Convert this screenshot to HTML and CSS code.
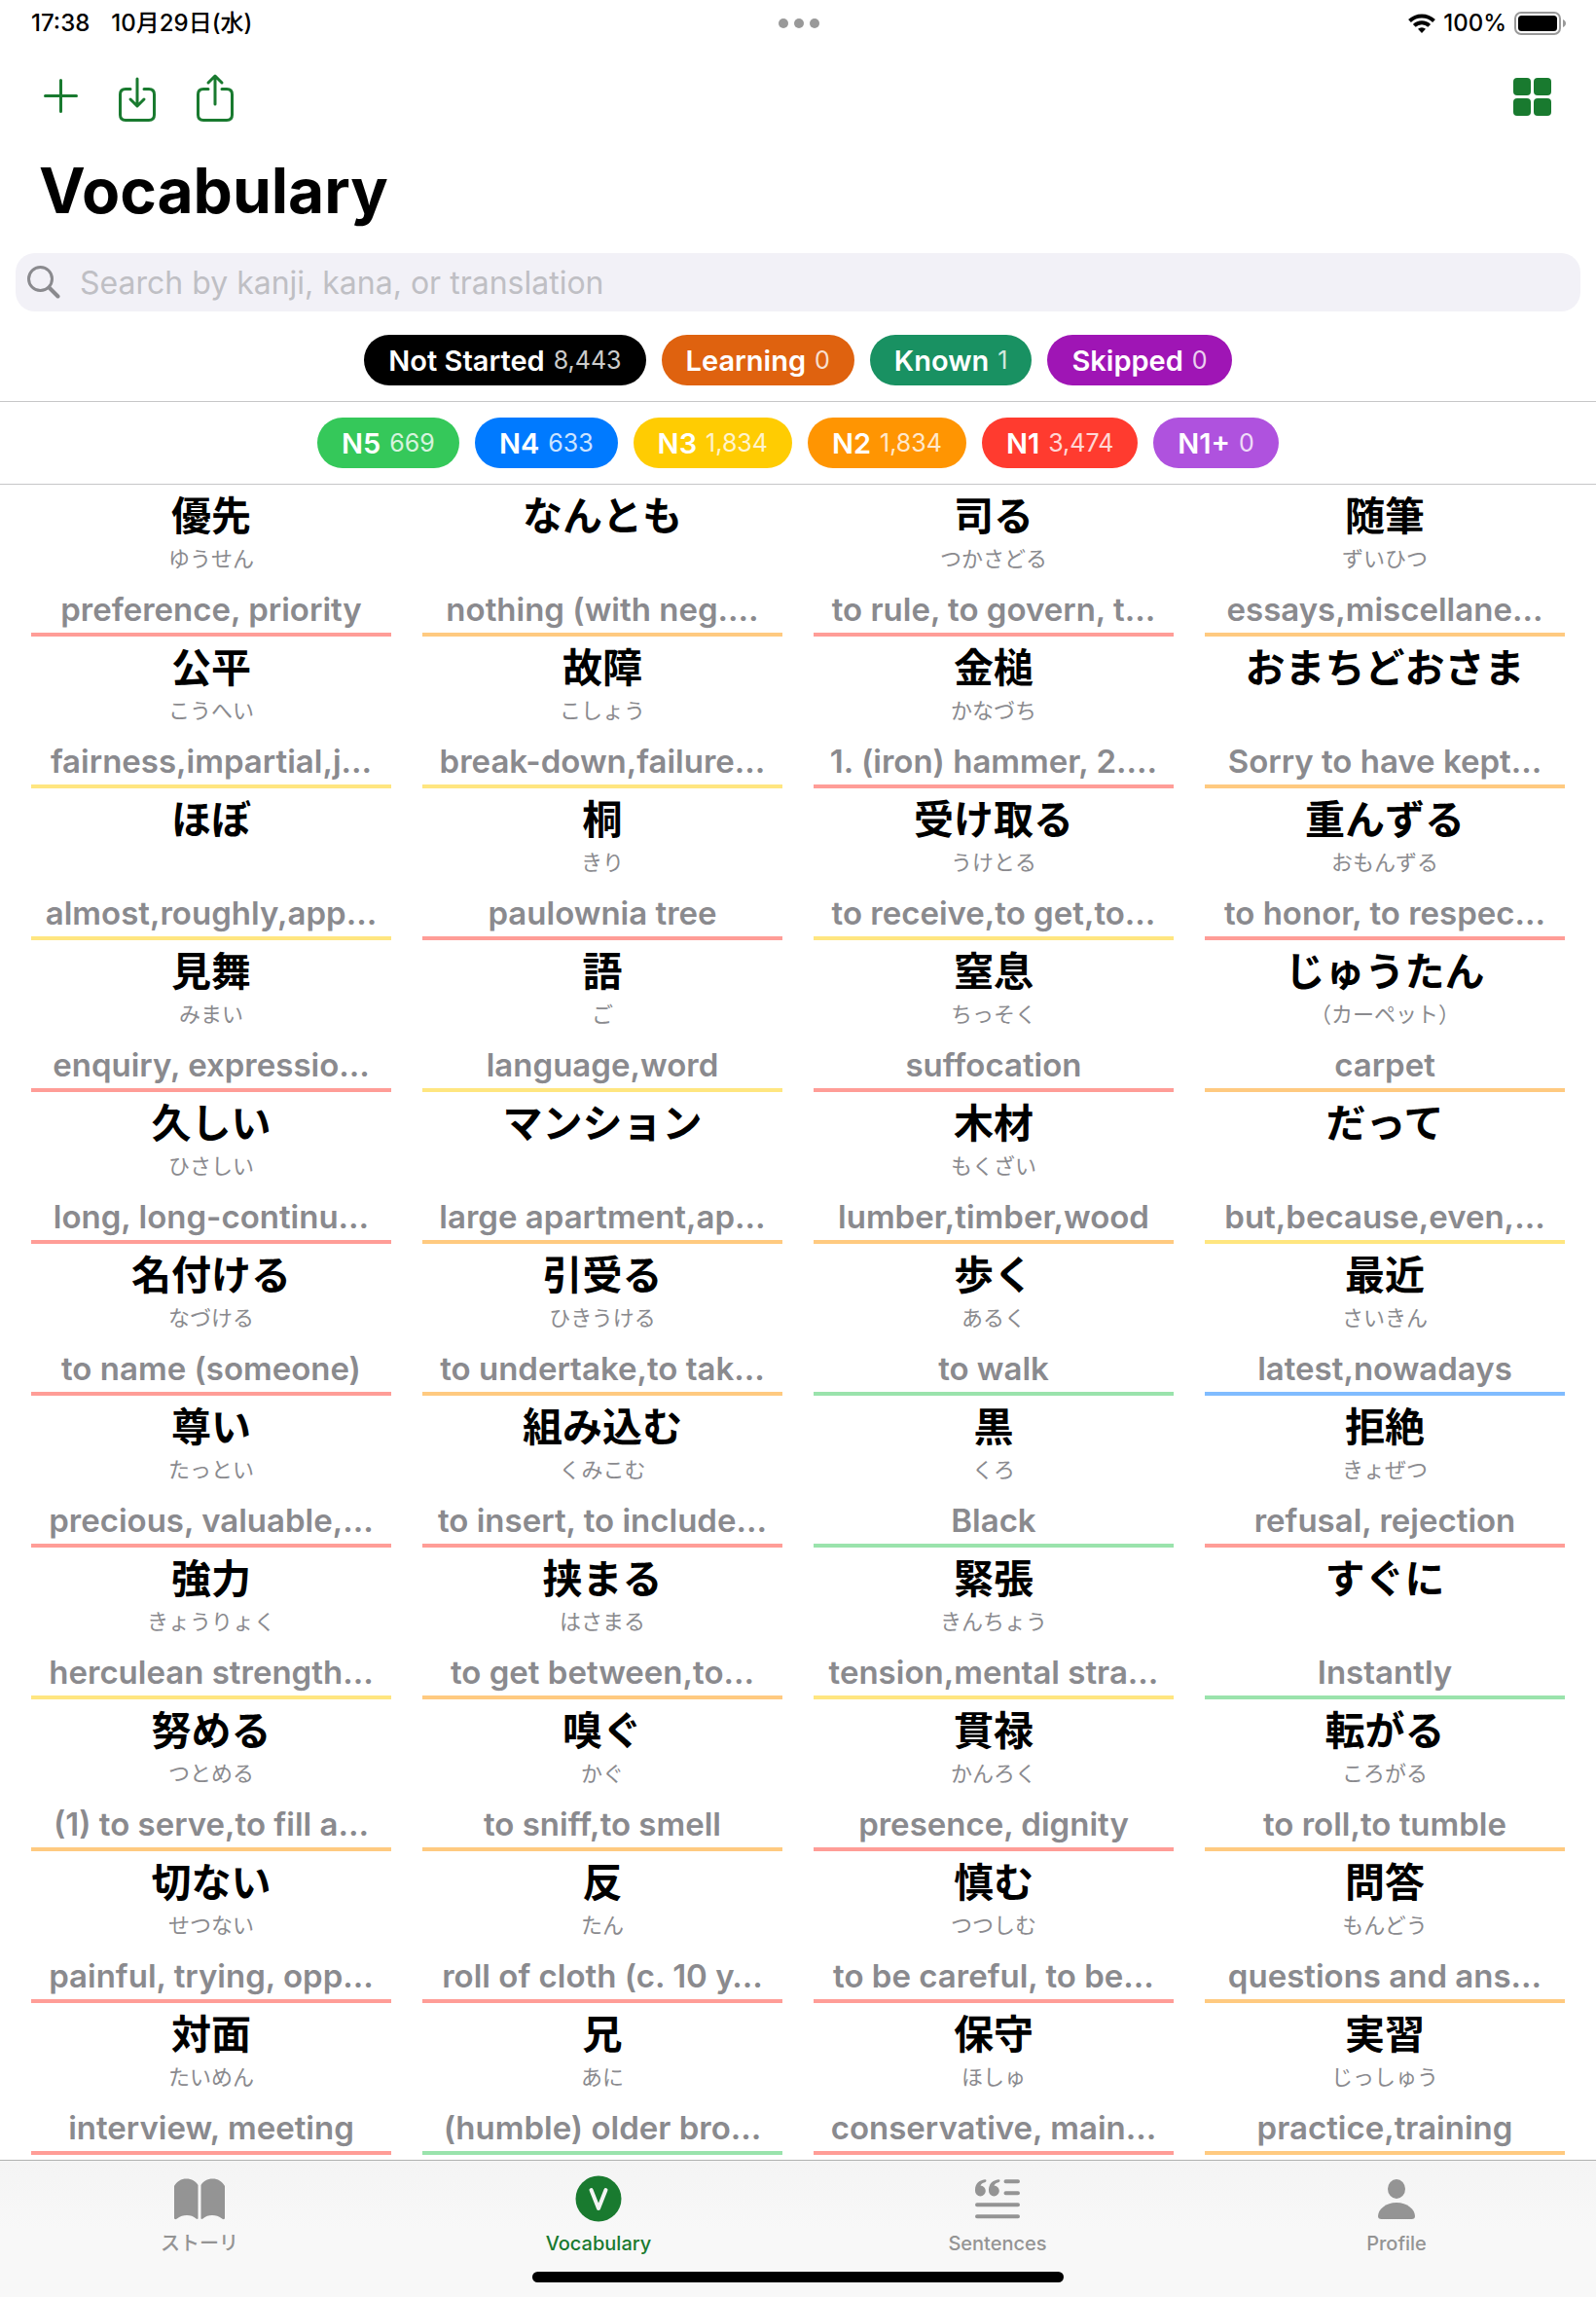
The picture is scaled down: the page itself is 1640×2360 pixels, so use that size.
FILE: index.html
```html
<!DOCTYPE html>
<html lang="ja">
<head>
<meta charset="utf-8">
<meta name="viewport" content="width=device-width, initial-scale=1">
<title>Vocabulary</title>
<link rel="stylesheet" href="styles.css">
</head>
<body>
<div class="status">
  <div class="status-left"><span>17:38</span><span>10月29日(水)</span></div>
  <svg class="dots" viewBox="0 0 42 10" width="42" height="10" fill="#999"><circle cx="5" cy="5" r="5"/><circle cx="21" cy="5" r="5"/><circle cx="37" cy="5" r="5"/></svg>
  <div class="status-right">
    <svg viewBox="0 0 28 20" width="28" height="20"><path fill="none" stroke="#000" stroke-width="4" d="M1.5 7.5a18 18 0 0 1 25 0M6.3 12.4a11 11 0 0 1 15.4 0"/><path d="M14 20l-4-4.200a6 6 0 0 1 8 0z"/></svg>
    <span>100%</span>
    <svg viewBox="0 0 54 24" width="54" height="24"><rect x="1" y="1" width="46" height="22" rx="6" fill="none" stroke="#999" stroke-width="2"/><rect x="4" y="4" width="40" height="16" rx="3.500"/><path fill="#999" d="M50 8c4 1.500 4 6.500 0 8z"/></svg>
  </div>
</div>

<header class="header">
  <div class="toolbar">
    <div class="tools">
      <button class="tool" aria-label="Add"><svg viewBox="0 0 44 52" width="44" height="52"><path d="M6.500 25.500h32M22.500 9.500v32"/></svg></button>
      <button class="tool" aria-label="Import"><svg viewBox="0 0 48 52" width="48" height="52"><path d="M18 18.500h-5q-5.500 0-5.500 5.500v21q0 5.500 5.500 5.500h24q5.500 0 5.500-5.500V24q0-5.500-5.500-5.500h-5M25 8v27M18 29l7 7 7-7"/></svg></button>
      <button class="tool" aria-label="Share"><svg viewBox="0 0 48 52" width="48" height="52"><path d="M18 18.500h-5q-5.500 0-5.500 5.500v21q0 5.500 5.500 5.500h24q5.500 0 5.500-5.500V24q0-5.500-5.500-5.500h-5M25 34V6M18 12l7-7 7 7"/></svg></button>
    </div>
    <button class="layout" aria-label="Grid layout"><svg viewBox="0 0 39 39" width="39" height="39"><rect width="18" height="18" rx="4"/><rect x="21" width="18" height="18" rx="4"/><rect y="21" width="18" height="18" rx="4"/><rect x="21" y="21" width="18" height="18" rx="4"/></svg></button>
  </div>
  <h1 class="title">Vocabulary</h1>
  <label class="search">
    <svg viewBox="0 0 34 34" width="34" height="34"><circle cx="13.500" cy="13.500" r="12" stroke-width="3"/><path d="M22.500 22.500l9 9" stroke-width="4"/></svg>
    <input type="search" aria-label="Search" placeholder="Search by kanji, kana, or translation">
  </label>
</header>

<div class="filters">
  <button class="chip not-started">Not Started <span>8,443</span></button>
  <button class="chip learning">Learning <span>0</span></button>
  <button class="chip known">Known <span>1</span></button>
  <button class="chip skipped">Skipped <span>0</span></button>
</div>
<div class="filters">
  <button class="chip level5">N5 <span>669</span></button>
  <button class="chip level4">N4 <span>633</span></button>
  <button class="chip level3">N3 <span>1,834</span></button>
  <button class="chip level2">N2 <span>1,834</span></button>
  <button class="chip level1">N1 <span>3,474</span></button>
  <button class="chip level0">N1+ <span>0</span></button>
</div>

<main class="words">
  <article class="word n1"><h2>優先</h2><p class="kana">ゆうせん</p><p class="meaning">preference, priority</p></article>
  <article class="word n2"><h2>なんとも</h2><p class="kana"></p><p class="meaning">nothing (with neg.…</p></article>
  <article class="word n1"><h2>司る</h2><p class="kana">つかさどる</p><p class="meaning">to rule, to govern, t…</p></article>
  <article class="word n2"><h2>随筆</h2><p class="kana">ずいひつ</p><p class="meaning">essays,miscellane…</p></article>

  <article class="word n3"><h2>公平</h2><p class="kana">こうへい</p><p class="meaning">fairness,impartial,j…</p></article>
  <article class="word n3"><h2>故障</h2><p class="kana">こしょう</p><p class="meaning">break-down,failure…</p></article>
  <article class="word n1"><h2>金槌</h2><p class="kana">かなづち</p><p class="meaning">1. (iron) hammer, 2.…</p></article>
  <article class="word n2"><h2>おまちどおさま</h2><p class="kana"></p><p class="meaning">Sorry to have kept…</p></article>

  <article class="word n3"><h2>ほぼ</h2><p class="kana"></p><p class="meaning">almost,roughly,app…</p></article>
  <article class="word n1"><h2>桐</h2><p class="kana">きり</p><p class="meaning">paulownia tree</p></article>
  <article class="word n3"><h2>受け取る</h2><p class="kana">うけとる</p><p class="meaning">to receive,to get,to…</p></article>
  <article class="word n1"><h2>重んずる</h2><p class="kana">おもんずる</p><p class="meaning">to honor, to respec…</p></article>

  <article class="word n1"><h2>見舞</h2><p class="kana">みまい</p><p class="meaning">enquiry, expressio…</p></article>
  <article class="word n3"><h2>語</h2><p class="kana">ご</p><p class="meaning">language,word</p></article>
  <article class="word n1"><h2>窒息</h2><p class="kana">ちっそく</p><p class="meaning">suffocation</p></article>
  <article class="word n2"><h2>じゅうたん</h2><p class="kana">（カーペット）</p><p class="meaning">carpet</p></article>

  <article class="word n1"><h2>久しい</h2><p class="kana">ひさしい</p><p class="meaning">long, long-continu…</p></article>
  <article class="word n2"><h2>マンション</h2><p class="kana"></p><p class="meaning">large apartment,ap…</p></article>
  <article class="word n2"><h2>木材</h2><p class="kana">もくざい</p><p class="meaning">lumber,timber,wood</p></article>
  <article class="word n3"><h2>だって</h2><p class="kana"></p><p class="meaning">but,because,even,…</p></article>

  <article class="word n1"><h2>名付ける</h2><p class="kana">なづける</p><p class="meaning">to name (someone)</p></article>
  <article class="word n2"><h2>引受る</h2><p class="kana">ひきうける</p><p class="meaning">to undertake,to tak…</p></article>
  <article class="word n5"><h2>歩く</h2><p class="kana">あるく</p><p class="meaning">to walk</p></article>
  <article class="word n4"><h2>最近</h2><p class="kana">さいきん</p><p class="meaning">latest,nowadays</p></article>

  <article class="word n1"><h2>尊い</h2><p class="kana">たっとい</p><p class="meaning">precious, valuable,…</p></article>
  <article class="word n1"><h2>組み込む</h2><p class="kana">くみこむ</p><p class="meaning">to insert, to include…</p></article>
  <article class="word n5"><h2>黒</h2><p class="kana">くろ</p><p class="meaning">Black</p></article>
  <article class="word n1"><h2>拒絶</h2><p class="kana">きょぜつ</p><p class="meaning">refusal, rejection</p></article>

  <article class="word n3"><h2>強力</h2><p class="kana">きょうりょく</p><p class="meaning">herculean strength…</p></article>
  <article class="word n2"><h2>挟まる</h2><p class="kana">はさまる</p><p class="meaning">to get between,to…</p></article>
  <article class="word n3"><h2>緊張</h2><p class="kana">きんちょう</p><p class="meaning">tension,mental stra…</p></article>
  <article class="word n5"><h2>すぐに</h2><p class="kana"></p><p class="meaning">Instantly</p></article>

  <article class="word n2"><h2>努める</h2><p class="kana">つとめる</p><p class="meaning">(1) to serve,to fill a…</p></article>
  <article class="word n2"><h2>嗅ぐ</h2><p class="kana">かぐ</p><p class="meaning">to sniff,to smell</p></article>
  <article class="word n1"><h2>貫禄</h2><p class="kana">かんろく</p><p class="meaning">presence, dignity</p></article>
  <article class="word n2"><h2>転がる</h2><p class="kana">ころがる</p><p class="meaning">to roll,to tumble</p></article>

  <article class="word n1"><h2>切ない</h2><p class="kana">せつない</p><p class="meaning">painful, trying, opp…</p></article>
  <article class="word n1"><h2>反</h2><p class="kana">たん</p><p class="meaning">roll of cloth (c. 10 y…</p></article>
  <article class="word n1"><h2>慎む</h2><p class="kana">つつしむ</p><p class="meaning">to be careful, to be…</p></article>
  <article class="word n2"><h2>問答</h2><p class="kana">もんどう</p><p class="meaning">questions and ans…</p></article>

  <article class="word n1"><h2>対面</h2><p class="kana">たいめん</p><p class="meaning">interview, meeting</p></article>
  <article class="word n5"><h2>兄</h2><p class="kana">あに</p><p class="meaning">(humble) older bro…</p></article>
  <article class="word n1"><h2>保守</h2><p class="kana">ほしゅ</p><p class="meaning">conservative, main…</p></article>
  <article class="word n2"><h2>実習</h2><p class="kana">じっしゅう</p><p class="meaning">practice,training</p></article>
</main>

<footer class="footer">
  <nav class="tabs">
    <a class="tab" href="#story"><svg viewBox="0 0 54 48" width="54" height="48"><path d="M1 11C4 6 8 3.500 13.500 3.500S23 6 25.500 10v34.500q-1 .8-2 0C21 42 17.500 41 14 41S7 42 3.500 44.700Q1 46 1 43.500zM28.500 10C31 6 35 3.500 40.500 3.500S50 6 53 11v32.500q0 2.500-2.500 1.200C47 42 43.500 41 40 41s-7 1-9.500 3.500q-1 .8-2 0z"/></svg><span>ストーリ</span></a>
    <a class="tab active" href="#vocabulary" aria-current="page"><svg viewBox="0 0 48 48" width="48" height="48"><circle cx="24" cy="24" r="23.500"/><path d="M16.500 15L24 34l7.500-19" fill="none" stroke="#f4f4f4" stroke-width="4" stroke-linecap="round" stroke-linejoin="round"/></svg><span>Vocabulary</span></a>
    <a class="tab" href="#sentences"><svg viewBox="0 0 48 48" width="48" height="48"><path d="M32.500 6.300H45M32.500 18.300H45M3 30.300h42M3 42.300h42" stroke="currentColor" stroke-width="4" stroke-linecap="round"/><path d="M1 15C1 9 5 5 11 4.300q1.500 0 1.500 1.300T11 7.200C8.500 7.700 7 9 6.500 10.600a5.400 5.400 0 1 1-5.500 5.400zM15 15C15 9 19 5 25 4.300q1.500 0 1.500 1.300T25 7.200c-2.500.5-4 1.800-4.500 3.400a5.400 5.400 0 1 1-5.500 5.400z"/></svg><span>Sentences</span></a>
    <a class="tab" href="#profile"><svg viewBox="0 0 48 48" width="48" height="48"><ellipse cx="24" cy="14" rx="9" ry="10"/><path d="M8.500 45Q5 45 5 42C5 35 13 28 24 28s19 7 19 14q0 3-3.500 3z"/></svg><span>Profile</span></a>
  </nav>
  <div class="home"></div>
</footer>
</body>
</html>
```

FILE: styles.css
```css
* { box-sizing: border-box; }

body {
  margin: 0;
  min-height: 100vh;
  display: flex;
  flex-direction: column;
  background: #fff;
  color: #000;
  font-family: Inter, "Noto Sans CJK JP", sans-serif;
}

h1, h2, p { margin: 0; }

svg { display: block; }

button, input {
  border: 0;
  padding: 0;
  margin: 0;
  background: none;
  font: inherit;
}

/* Status bar */
.status {
  display: grid;
  grid-template-columns: 1fr auto 1fr;
  align-items: center;
  height: 48px;
  padding: 0 30px 0 32px;
  font-size: 24px;
  line-height: 32px;
  font-weight: 500;
}
.status-left { display: flex; align-items: baseline; gap: 22px; }
.status-right { display: flex; align-items: center; justify-content: flex-end; gap: 8px; }

/* Header */
.header { padding: 20px 16px 0; }
.toolbar {
  display: flex;
  justify-content: space-between;
  align-items: center;
  height: 62px;
  padding: 0 30px 0 24px;
}
.tools { display: flex; gap: 32px; }
.tool svg {
  fill: none;
  stroke: #197a2f;
  stroke-width: 3;
  stroke-linecap: round;
  stroke-linejoin: round;
}
.layout svg { fill: #197a2f; }
.title {
  padding: 0 24px;
  margin: 26px 0 24px;
  font-size: 64px;
  line-height: 80px;
  font-weight: 700;
}
.search {
  display: flex;
  align-items: center;
  gap: 20px;
  height: 60px;
  padding: 0 12px;
  border-radius: 20px;
  background: #f2f1f7;
}
.search svg { fill: none; stroke: #8a8a8e; stroke-linecap: round; }
.search input {
  flex: 1;
  min-width: 0;
  height: 60px;
  font-size: 32px;
  outline: none;
  appearance: none;
}
.search input::placeholder { color: #bfbfc4; opacity: 1; }

/* Filter chips */
.filters {
  display: flex;
  justify-content: center;
  gap: 16px;
  padding: 16px;
  border-bottom: 1px solid #c6c6c8;
}
.header + .filters { padding-top: 24px; }
.chip {
  display: flex;
  align-items: center;
  gap: 9px;
  height: 52px;
  padding: 0 25px;
  border-radius: 26px;
  color: #fff;
  font-size: 29px;
  font-weight: 600;
}
.chip span { font-size: 25px; font-weight: 400; opacity: .8; }
.not-started { background: #000; }
.learning { background: #df620f; }
.known { background: #199162; }
.skipped { background: #9f15b5; }
.level5 { background: #35c85a; }
.level4 { background: #007aff; }
.level3 { background: #ffcc02; }
.level2 { background: #ff9502; }
.level1 { background: #ff3b2f; }
.level0 { background: #af52de; }

/* Word grid */
.words {
  display: grid;
  grid-template-columns: repeat(4, minmax(0, 1fr));
  column-gap: 32px;
  padding: 0 32px 5px;
}
.word {
  display: flex;
  flex-direction: column;
  height: 156px;
  padding: 8px 0 4px;
  border-bottom: 4px solid;
  text-align: center;
  white-space: nowrap;
}
.word h2 { font-size: 41px; line-height: 48px; font-weight: 700; }
.kana { margin-top: 6px; min-height: 28px; font-size: 22px; line-height: 28px; color: #8a8a8e; }
.meaning { margin-top: auto; font-size: 33px; line-height: 40px; font-weight: 600; color: #8a8a8e; }
.n1 { border-color: #ff9d97; }
.n2 { border-color: #ffca80; }
.n3 { border-color: #ffe680; }
.n4 { border-color: #80bcff; }
.n5 { border-color: #9ae3ac; }

/* Tab bar */
.footer {
  margin-top: auto;
  border-top: 1px solid #b0b1b0;
  background: linear-gradient(#f4f4f4, #f8f8f8 50%);
}
.tabs {
  display: grid;
  grid-template-columns: repeat(4, 1fr);
  padding: 15px 0 17px;
}
.tab {
  display: flex;
  flex-direction: column;
  align-items: center;
  gap: 10px;
  color: #949494;
  font-size: 20px;
  line-height: 24px;
  font-weight: 500;
  text-decoration: none;
}
.tab svg { fill: currentColor; }
.tab.active { color: #197a2f; }
.home {
  width: 33.3%;
  height: 11px;
  margin: 0 auto 15px;
  border-radius: 6px;
  background: #000;
}
```
